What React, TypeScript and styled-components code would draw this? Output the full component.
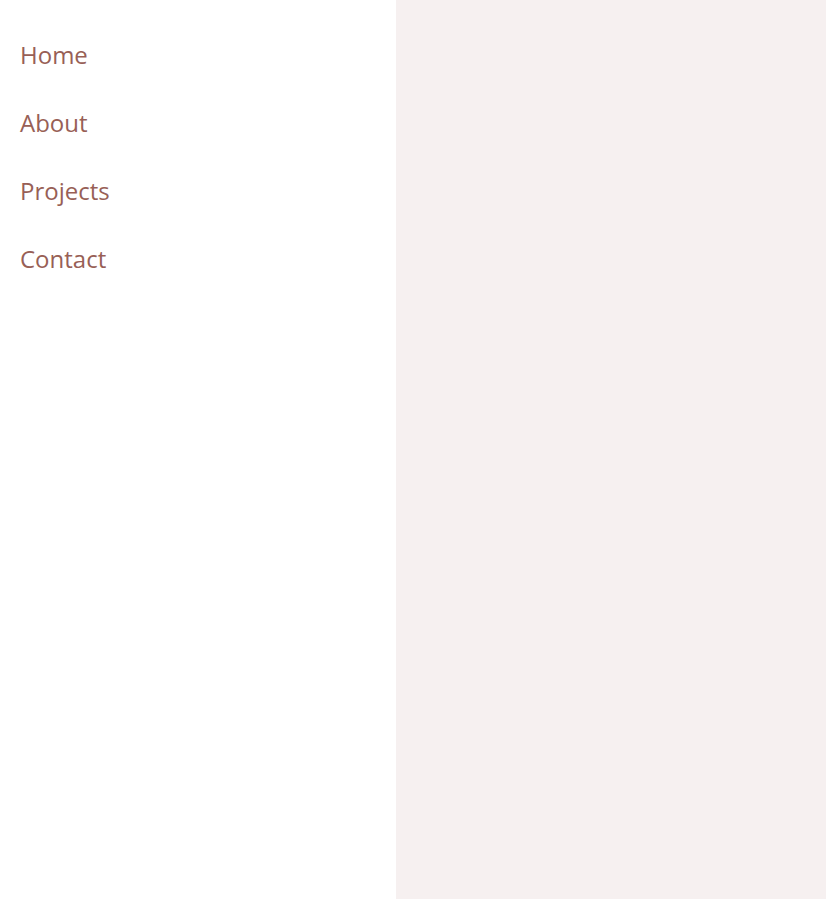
import React from "react";
import styled, { createGlobalStyle } from "styled-components";

const Global = createGlobalStyle`
  html, body { margin: 0; padding: 0; }
  body { font-family: "Open Sans", "DejaVu Sans", sans-serif; background: #ffffff; }
`;

const Page = styled.div`
  display: flex;
  width: 826px;
  height: 899px;
`;

const Sidebar = styled.nav`
  width: 396px;
  flex-shrink: 0;
  background: #ffffff;
  padding: 21px 0 0 20px;
  box-sizing: border-box;
  display: flex;
  flex-direction: column;
`;

const NavLink = styled.a`
  display: block;
  padding: 20px 0;
  font-size: 24px;
  line-height: 28px;
  color: #985f56;
  text-decoration: none;
`;

const Content = styled.main`
  flex: 1;
  background: #f6f0f0;
`;

export default function App() {
  const links = ["Home", "About", "Projects", "Contact"];
  return (
    <>
      <Global />
      <Page>
        <Sidebar>
          {links.map((l) => (
            <NavLink key={l} href="#">{l}</NavLink>
          ))}
        </Sidebar>
        <Content />
      </Page>
    </>
  );
}
